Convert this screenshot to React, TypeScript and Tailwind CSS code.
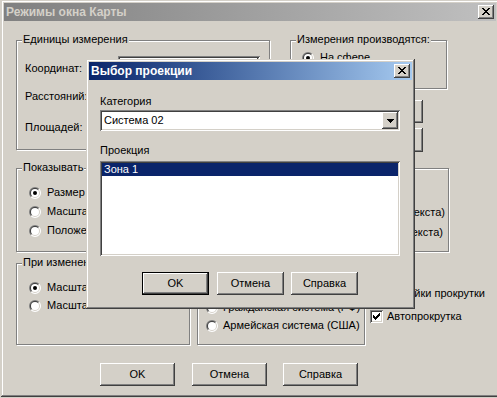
import React from "react";

const RAISED =
  "shadow-[inset_-1px_-1px_#404040,inset_1px_1px_#ffffff,inset_-2px_-2px_#808080,inset_2px_2px_#d4d0c8]";
const SUNKEN =
  "shadow-[inset_1px_1px_#808080,inset_-1px_-1px_#ffffff,inset_2px_2px_#404040,inset_-2px_-2px_#d4d0c8]";
const FRAME =
  "shadow-[inset_-1px_-1px_#404040,inset_1px_1px_#d4d0c8,inset_-2px_-2px_#808080,inset_2px_2px_#ffffff]";

function Pixels({ rows, w, h }: { rows: string[]; w: number; h: number }) {
  return (
    <svg width={w} height={h} viewBox={`0 0 ${w} ${h}`} shapeRendering="crispEdges" className="block shrink-0">
      {rows.flatMap((r, y) =>
        [...r].map((c, x) =>
          c === "X" ? <rect key={`${x}-${y}`} x={x} y={y} width="1" height="1" fill="#000000" /> : null
        )
      )}
    </svg>
  );
}

function CloseBtn() {
  return (
    <div className={`w-[16px] h-[14px] bg-[#d4d0c8] pl-[4px] pt-[3px] shrink-0 ${RAISED}`}>
      <Pixels w={8} h={7} rows={["XX....XX", ".XX..XX.", "..XXXX..", "...XX...", "..XXXX..", ".XX..XX.", "XX....XX"]} />
    </div>
  );
}

function half(r: number, tl: boolean) {
  const a = r / Math.SQRT2;
  return tl
    ? `M${6 - a} ${6 + a}A${r} ${r} 0 0 1 ${6 + a} ${6 - a}Z`
    : `M${6 + a} ${6 - a}A${r} ${r} 0 0 1 ${6 - a} ${6 + a}Z`;
}

function Radio({ checked = false }: { checked?: boolean }) {
  return (
    <svg width="12" height="12" viewBox="0 0 12 12" className="block shrink-0">
      <path d={half(6, true)} fill="#808080" />
      <path d={half(6, false)} fill="#ffffff" />
      <path d={half(5, true)} fill="#404040" />
      <path d={half(5, false)} fill="#d4d0c8" />
      <circle cx="6" cy="6" r="4" fill="#ffffff" />
      {checked && <circle cx="6" cy="6" r="2" fill="#000000" />}
    </svg>
  );
}

function RadioRow({ checked = false, label, gap = "gap-[6px]" }: { checked?: boolean; label: string; gap?: string }) {
  return (
    <div className={`flex items-center whitespace-nowrap ${gap}`}>
      <Radio checked={checked} />
      <span>{label}</span>
    </div>
  );
}

function Check() {
  return (
    <div className={`w-[13px] h-[13px] bg-white pl-[3px] pt-[3px] shrink-0 ${SUNKEN}`}>
      <Pixels w={7} h={7} rows={["......X", ".....XX", "X...XXX", "XX.XXX.", "XXXXX..", ".XXX...", "..X...."]} />
    </div>
  );
}

function Group({ label, className = "", children }: { label?: string; className?: string; children?: React.ReactNode }) {
  return (
    <div className={`relative shrink-0 border border-[#808080] shadow-[1px_1px_0_#ffffff,inset_1px_1px_0_#ffffff] ${className}`}>
      {label && (
        <span className="absolute left-[5px] -top-[8px] bg-[#d4d0c8] px-[1px] whitespace-nowrap">{label}</span>
      )}
      {children}
    </div>
  );
}

function Btn({ children, className = "", def = false }: { children?: React.ReactNode; className?: string; def?: boolean }) {
  if (def) {
    return (
      <div className={`flex border border-black shrink-0 ${className}`}>
        <div className={`flex-1 flex items-center justify-center ${RAISED}`}>{children}</div>
      </div>
    );
  }
  return <div className={`flex items-center justify-center shrink-0 ${RAISED} ${className}`}>{children}</div>;
}

function Combo({ className = "", text = "" }: { className?: string; text?: string }) {
  return (
    <div className={`flex bg-white shrink-0 p-[2px] ${SUNKEN} ${className}`}>
      <div className="flex-1 flex items-center pl-[2px] whitespace-nowrap overflow-hidden">{text}</div>
      <div className={`w-[16px] bg-[#d4d0c8] flex items-center justify-center ${RAISED}`}>
        <Pixels w={7} h={4} rows={["XXXXXXX", ".XXXXX.", "..XXX..", "...X..."]} />
      </div>
    </div>
  );
}

export default function App() {
  return (
    <div className="w-[497px] h-[398px] overflow-hidden bg-[#d4d0c8] font-['Liberation_Sans',Arial,sans-serif] text-[11px] leading-[13px] text-black">
      <div className={`relative ml-[1px] w-[498px] h-[397px] p-[3px] bg-[#d4d0c8] ${FRAME}`}>
        {/* parent title bar (inactive) */}
        <div className="h-[18px] flex items-center bg-linear-to-r from-[#808080] to-[#c0c0c0] pl-[2px] pr-[2px]">
          <span className="flex-1 font-bold text-[12px] text-[#d4d0c8] whitespace-nowrap">Режимы окна Карты</span>
          <CloseBtn />
        </div>

        {/* row 1 */}
        <div className="flex items-start mt-[19px]">
          <Group label="Единицы измерения" className="ml-[12px] w-[254px] h-[110px]">
            <div className="flex flex-col pt-[15px] pl-[8px]">
              <div className="flex items-start">
                <span className="w-[93px] mt-[6px]">Координат:</span>
                <Combo className="w-[142px] h-[21px]" />
              </div>
              <div className="flex items-start mt-[7px]">
                <span className="w-[93px] mt-[6px]">Расстояний:</span>
                <Combo className="w-[142px] h-[21px]" />
              </div>
              <div className="flex items-start mt-[10px]">
                <span className="w-[93px] mt-[6px]">Площадей:</span>
                <Combo className="w-[142px] h-[21px]" />
              </div>
            </div>
          </Group>
          <div className="ml-[20px] w-[158px] flex flex-col">
            <Group label="Измерения производятся:" className="w-[157px] h-[49px]">
              <div className="flex flex-col pt-[10px] pl-[11px]">
                <RadioRow checked label="На сфере" />
              </div>
            </Group>
            <Btn className="mt-[11px] ml-[58px] w-[75px] h-[23px]" />
            <Btn className="mt-[5px] ml-[58px] w-[75px] h-[24px]" />
          </div>
        </div>

        {/* row 2 */}
        <div className="flex items-start mt-[16px]">
          <Group label="Показывать" className="ml-[12px] w-[174px] h-[84px]">
            <div className="flex flex-col pt-[17px] pl-[12px] gap-[6px]">
              <RadioRow checked label="Размер окна" />
              <RadioRow label="Масштаб карты" />
              <RadioRow label="Положение курсора" />
            </div>
          </Group>
          <Group className="ml-[7px] w-[252px] h-[84px]">
            <div className="flex flex-col items-end pt-[37px] pr-[3px] gap-[7px]">
              <RadioRow label="Над точкой (по высоте текста)" />
              <div className="mr-[2px]">
                <RadioRow label="Под точкой (по высоте текста)" />
              </div>
            </div>
          </Group>
        </div>

        {/* row 3 */}
        <div className="flex items-start mt-[11px]">
          <Group label="При изменении размера окна" className="ml-[12px] w-[174px] h-[82px]">
            <div className="flex flex-col pt-[17px] pl-[12px] gap-[5px]">
              <RadioRow checked label="Масштаб сохранять" />
              <RadioRow label="Масштаб изменять" />
            </div>
          </Group>
          <Group className="ml-[7px] w-[168px] h-[82px]">
            <div className="flex flex-col pt-[37px] pl-[8px] gap-[5px]">
              <RadioRow label="Гражданская система (РФ)" gap="gap-[5px]" />
              <RadioRow label="Армейская система (США)" gap="gap-[5px]" />
            </div>
          </Group>
          <div className="ml-[5px] flex flex-col">
            <span className="mt-[24px] w-[115px] text-right whitespace-nowrap">Настройки прокрутки</span>
            <div className="mt-[10px] flex items-center gap-[4px] whitespace-nowrap">
              <Check />
              <span>Автопрокрутка</span>
            </div>
          </div>
        </div>

        {/* row 4: buttons */}
        <div className="flex mt-[18px]">
          <Btn className="ml-[96px] w-[75px] h-[23px]">OK</Btn>
          <Btn className="ml-[17px] w-[75px] h-[23px]">Отмена</Btn>
          <Btn className="ml-[16px] w-[75px] h-[23px]">Справка</Btn>
        </div>

        {/* overlay dialog */}
        <div className={`absolute left-[85px] top-[59px] w-[329px] h-[250px] p-[3px] bg-[#d4d0c8] flex flex-col ${FRAME}`}>
          <div className="h-[18px] flex items-center bg-linear-to-r from-[#0a246a] to-[#a6caf0] pl-[2px] pr-[2px] shrink-0">
            <span className="flex-1 font-bold text-[12px] text-white whitespace-nowrap">Выбор проекции</span>
            <CloseBtn />
          </div>
          <div className="flex flex-col pl-[11px]">
            <span className="mt-[15px]">Категория</span>
            <Combo className="mt-[2px] w-[300px] h-[21px]" text="Система 02" />
            <span className="mt-[13px]">Проекция</span>
            <div className={`mt-[4px] w-[300px] h-[95px] bg-white p-[2px] ${SUNKEN}`}>
              <div className="h-[13px] bg-[#0a246a] text-white pl-[2px] whitespace-nowrap">Зона 1</div>
            </div>
            <div className="flex mt-[16px]">
              <Btn def className="ml-[42px] w-[67px] h-[23px]">OK</Btn>
              <Btn className="ml-[8px] w-[67px] h-[23px]">Отмена</Btn>
              <Btn className="ml-[7px] w-[67px] h-[23px]">Справка</Btn>
            </div>
          </div>
        </div>
      </div>
    </div>
  );
}
